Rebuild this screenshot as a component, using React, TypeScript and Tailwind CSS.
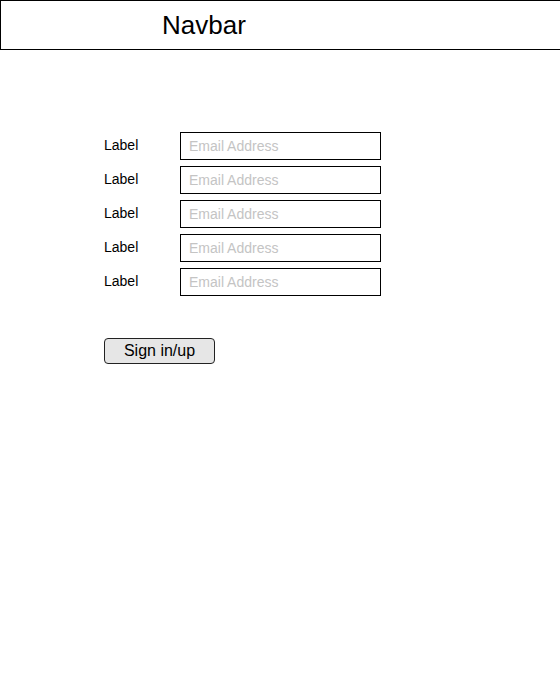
import React from 'react';

const fields = ['Label', 'Label', 'Label', 'Label', 'Label'];

export default function App() {
  return (
    <div className="min-h-[700px] bg-white font-['Liberation_Sans',Arial,sans-serif] text-black">
      {/* Top bar */}
      <div className="h-[50px] border-y border-l border-black flex items-center pl-[161px]">
        <span className="text-[26px] leading-none">Navbar</span>
      </div>

      {/* Sign-in form */}
      <form className="pl-[104px] pt-[82px]" onSubmit={(e) => e.preventDefault()}>
        <div className="flex flex-col gap-[6px]">
          {fields.map((label, i) => (
            <div key={i} className="flex items-center">
              <label className="w-[76px] text-[14px] leading-none -mt-[2px]">{label}</label>
              <input
                type="email"
                placeholder="Email Address"
                className="w-[201px] h-[28px] border border-black px-[8px] text-[14px] outline-none placeholder:text-[#c4c4c4]"
              />
            </div>
          ))}
        </div>

        <button
          type="submit"
          className="mt-[42px] w-[111px] h-[26px] bg-[#e6e6e6] border border-[#222] rounded-[4px] text-[16px] leading-none"
        >
          Sign in/up
        </button>
      </form>
    </div>
  );
}
